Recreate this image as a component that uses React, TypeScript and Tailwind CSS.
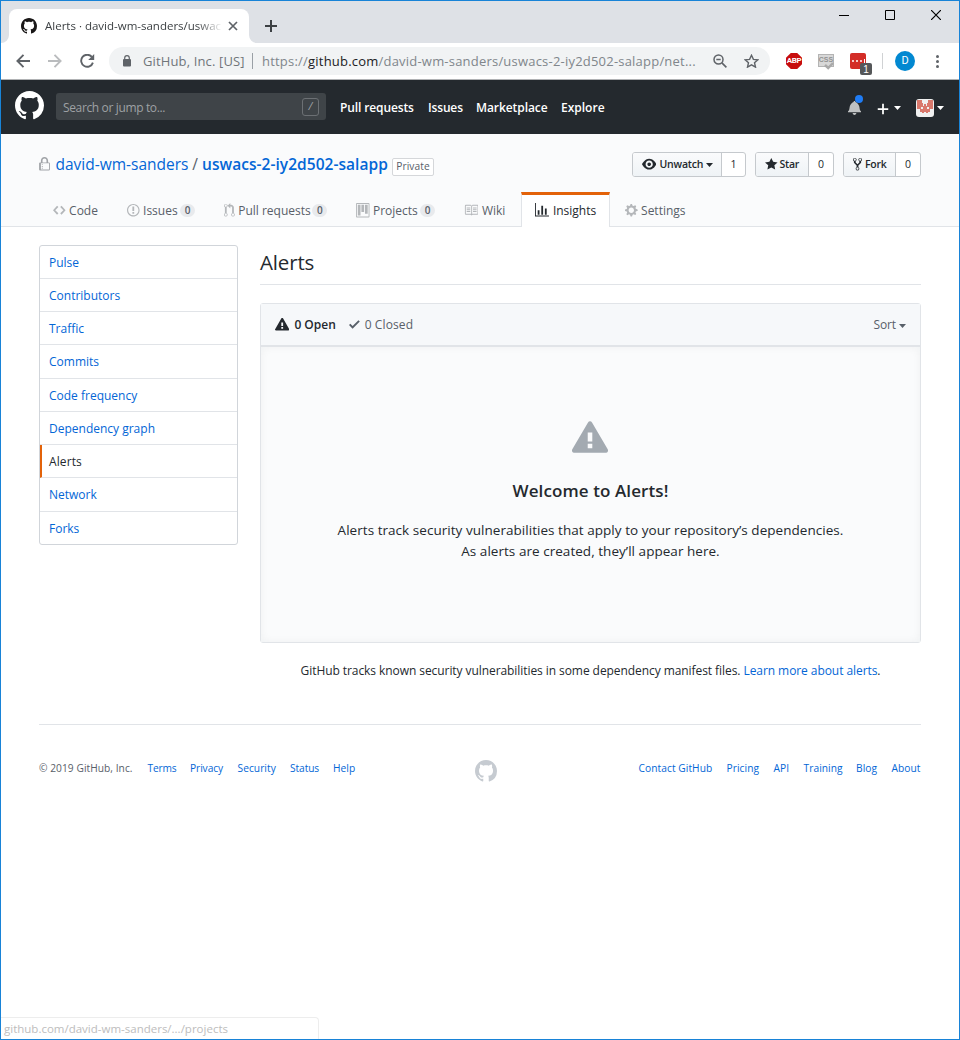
import type { ReactNode } from "react";

type IconProps = { d: string; vw?: number; className: string };

function Icon({ d, vw = 16, className }: IconProps) {
  return (
    <svg viewBox={`0 0 ${vw} 16`} className={`shrink-0 ${className}`} fill="currentColor" aria-hidden="true">
      <path fillRule="evenodd" d={d} />
    </svg>
  );
}

const P = {
  mark: "M8 0C3.58 0 0 3.58 0 8c0 3.54 2.29 6.53 5.47 7.59.4.07.55-.17.55-.38 0-.19-.01-.82-.01-1.49-2.01.37-2.53-.49-2.69-.94-.09-.23-.48-.94-.82-1.13-.28-.15-.68-.52-.01-.53.63-.01 1.08.58 1.23.82.72 1.21 1.87.87 2.33.66.07-.52.28-.87.51-1.07-1.78-.2-3.64-.89-3.64-3.95 0-.87.31-1.59.82-2.15-.08-.2-.36-1.02.08-2.12 0 0 .67-.21 2.2.82.64-.18 1.32-.27 2-.27.68 0 1.36.09 2 .27 1.53-1.04 2.2-.82 2.2-.82.44 1.1.16 1.92.08 2.12.51.56.82 1.27.82 2.15 0 3.07-1.87 3.75-3.65 3.95.29.25.54.73.54 1.48 0 1.07-.01 1.93-.01 2.2 0 .21.15.46.55.38A8.013 8.013 0 0 0 16 8c0-4.42-3.58-8-8-8z",
  lock: "M4 13H3v-1h1v1zm8-6v7c0 .55-.45 1-1 1H1c-.55 0-1-.45-1-1V7c0-.55.45-1 1-1h1V4c0-2.2 1.8-4 4-4s4 1.8 4 4v2h1c.55 0 1 .45 1 1zM3.8 6h4.41V4c0-1.22-.98-2.2-2.2-2.2-1.22 0-2.2.98-2.2 2.2v2H3.8zM11 7H2v7h9V7zM4 8H3v1h1V8zm0 2H3v1h1v-1z",
  code: "M9.5 3L8 4.5 11.5 8 8 11.5 9.5 13 14 8 9.5 3zm-5 0L0 8l4.5 5L6 11.5 2.5 8 6 4.5 4.5 3z",
  issue: "M7 2.3c3.14 0 5.7 2.56 5.7 5.7s-2.56 5.7-5.7 5.7A5.71 5.71 0 0 1 1.3 8c0-3.14 2.56-5.7 5.7-5.7zM7 1C3.14 1 0 4.14 0 8s3.14 7 7 7 7-3.14 7-7-3.14-7-7-7zm1 3H6v5h2V4zm0 6H6v2h2v-2z",
  pull: "M11 11.28V5c-.03-.78-.34-1.47-.94-2.06C9.46 2.35 8.78 2.03 8 2H7V0L4 3l3 3V4h1c.27.02.48.11.69.31.21.2.3.42.31.69v6.28A1.993 1.993 0 0 0 10 15a1.993 1.993 0 0 0 1-3.72zm-1 2.92c-.66 0-1.2-.55-1.2-1.2 0-.65.55-1.2 1.2-1.2.65 0 1.2.55 1.2 1.2 0 .65-.55 1.2-1.2 1.2zM4 3c0-1.11-.89-2-2-2a1.993 1.993 0 0 0-1 3.72v6.56A1.993 1.993 0 0 0 2 15a1.993 1.993 0 0 0 1-3.72V4.72c.59-.34 1-.98 1-1.72zm-.8 10c0 .66-.55 1.2-1.2 1.2-.65 0-1.2-.55-1.2-1.2 0-.65.55-1.2 1.2-1.2.65 0 1.2.55 1.2 1.2zM2 4.2C1.34 4.2.8 3.65.8 3c0-.65.55-1.2 1.2-1.2.65 0 1.2.55 1.2 1.2 0 .65-.55 1.2-1.2 1.2z",
  project: "M10 12h3V2h-3v10zm-4-2h3V2H6v8zm-4 4h3V2H2v12zm-1 1h13V1H1v14zM14 0H1a1 1 0 0 0-1 1v14a1 1 0 0 0 1 1h13a1 1 0 0 0 1-1V1a1 1 0 0 0-1-1z",
  book: "M3 5h4v1H3V5zm0 3h4V7H3v1zm0 2h4V9H3v1zm11-5h-4v1h4V5zm0 2h-4v1h4V7zm0 2h-4v1h4V9zm2-6v9c0 .55-.45 1-1 1H9.5l-1 1-1-1H2c-.55 0-1-.45-1-1V3c0-.55.45-1 1-1h5.5l1 1 1-1H15c.55 0 1 .45 1 1zm-8 .5L7.5 3H2v9h6V3.5zm7-.5H9.5l-.5.5V12h6V3z",
  graph: "M16 14v1H0V0h1v14h15zM5 13H3V8h2v5zm4 0H7V3h2v10zm4 0h-2V6h2v7z",
  gear: "M14 8.77v-1.6l-1.94-.64-.45-1.09.88-1.84-1.13-1.13-1.81.91-1.09-.45-.69-1.92h-1.6l-.63 1.94-1.11.45-1.84-.88-1.13 1.13.91 1.81-.45 1.09L0 7.23v1.59l1.94.64.45 1.09-.88 1.84 1.13 1.13 1.81-.91 1.09.45.69 1.92h1.59l.63-1.94 1.11-.45 1.84.88 1.13-1.13-.92-1.81.47-1.09L14 8.75v.02zM7 11c-1.66 0-3-1.34-3-3s1.34-3 3-3 3 1.34 3 3-1.34 3-3 3z",
  eye: "M8.06 2C3 2 0 8 0 8s3 6 8.06 6C13 14 16 8 16 8s-3-6-7.94-6zM8 12c-2.2 0-4-1.78-4-4 0-2.2 1.8-4 4-4 2.22 0 4 1.8 4 4 0 2.22-1.78 4-4 4zm2-4c0 1.11-.89 2-2 2-1.11 0-2-.89-2-2 0-1.11.89-2 2-2 1.11 0 2 .89 2 2z",
  star: "M14 6l-4.9-.64L7 1 4.9 5.36 0 6l3.6 3.26L2.67 14 7 11.67 11.33 14l-.93-4.74z",
  fork: "M8 1a1.993 1.993 0 0 0-1 3.72V6L5 8 3 6V4.72A1.993 1.993 0 0 0 2 1a1.993 1.993 0 0 0-1 3.72V6.5l3 3v1.78A1.993 1.993 0 0 0 5 15a1.993 1.993 0 0 0 1-3.72V9.5l3-3V4.72A1.993 1.993 0 0 0 8 1zM2 4.2C1.34 4.2.8 3.65.8 3c0-.65.55-1.2 1.2-1.2.65 0 1.2.55 1.2 1.2 0 .65-.55 1.2-1.2 1.2zm3 10c-.66 0-1.2-.55-1.2-1.2 0-.65.55-1.2 1.2-1.2.65 0 1.2.55 1.2 1.2 0 .65-.55 1.2-1.2 1.2zm3-10c-.66 0-1.2-.55-1.2-1.2 0-.65.55-1.2 1.2-1.2.65 0 1.2.55 1.2 1.2 0 .65-.55 1.2-1.2 1.2z",
  alert: "M8.893 1.5c-.183-.31-.52-.5-.887-.5s-.703.19-.886.5L.138 13.499a.98.98 0 0 0 0 1.001c.193.31.53.501.886.501h13.964c.367 0 .704-.19.877-.5a1.03 1.03 0 0 0 .01-1.002L8.893 1.5zm.133 11.497H6.987v-2.003h2.039v2.003zm0-3.004H6.987V5.987h2.039v4.006z",
  check: "M12 5l-8 8-4-4 1.5-1.5L4 10l6.5-6.5z",
  bell: "M14 12v1H0v-1l.73-.58c.77-.77.81-2.55 1.19-4.42C2.69 3.23 6 2 6 2c0-.55.45-1 1-1s1 .45 1 1c0 0 3.39 1.23 4.16 5 .38 1.88.42 3.66 1.19 4.42l.66.58H14zm-7 4c1.11 0 2-.89 2-2H5c0 1.11.89 2 2 2z",
  plus: "M12 9H7v5H5V9H0V7h5V2h2v5h5v2z",
};

function Caret({ className = "" }: { className?: string }) {
  return (
    <svg viewBox="0 0 7 4" className={`h-1 w-[7px] shrink-0 ${className}`} fill="currentColor" aria-hidden="true">
      <path d="M0 0h7L3.500 4z" />
    </svg>
  );
}

function TitleBar() {
  return (
    <div className="flex h-[42px] bg-[#dee1e6] pt-2">
      <svg className="h-2 w-2 shrink-0 self-end" viewBox="0 0 8 8" fill="#fff" aria-hidden="true">
        <path d="M8 0v8H0a8 8 0 0 0 8-8z" />
      </svg>
      <div className="flex h-[34px] w-[240px] shrink-0 items-center rounded-t-lg bg-white pl-3">
        <Icon d={P.mark} className="size-4 text-[#191717]" />
        <div className="ml-2 w-[176px] whitespace-nowrap text-[11.500px] text-[#3c4043] [mask-image:linear-gradient(to_right,black_152px,transparent_178px)]">
          Alerts · david-wm-sanders/uswac
        </div>
        <svg className="ml-[7px] size-[10px] shrink-0" viewBox="0 0 10 10" fill="none" stroke="#5f6368" strokeWidth="1.700" aria-hidden="true">
          <path d="M1 1l8 8M9 1L1 9" />
        </svg>
      </div>
      <svg className="h-2 w-2 shrink-0 self-end" viewBox="0 0 8 8" fill="#fff" aria-hidden="true">
        <path d="M0 0v8h8a8 8 0 0 1-8-8z" />
      </svg>
      <svg className="ml-2 mt-[11px] size-3 shrink-0" viewBox="0 0 12 12" fill="none" stroke="#3c4043" strokeWidth="2" aria-hidden="true">
        <path d="M6 0v12M0 6h12" />
      </svg>
      <div className="ml-auto mr-[18px] mt-[1px] flex h-3 gap-[36px] text-black">
        <svg className="size-[10px]" viewBox="0 0 10 10" stroke="currentColor" aria-hidden="true"><path d="M0 5.500h10" /></svg>
        <svg className="size-[10px]" viewBox="0 0 10 10" fill="none" stroke="currentColor" aria-hidden="true"><path d="M.5.5h9v9h-9z" /></svg>
        <svg className="size-[10px]" viewBox="0 0 10 10" fill="none" stroke="currentColor" strokeWidth="1.200" aria-hidden="true"><path d="M0 0l10 10M10 0L0 10" /></svg>
      </div>
    </div>
  );
}

function Toolbar() {
  return (
    <div className="flex h-9 items-center bg-white">
      <svg className="ml-[15px] h-[14px] w-[14px] shrink-0" viewBox="0 0 14 14" fill="none" stroke="#5f6368" strokeWidth="1.900" aria-hidden="true">
        <path d="M14 7H1.500M7.500 .8L1.400 7l6.100 6.200" />
      </svg>
      <svg className="ml-[18px] h-[14px] w-[14px] shrink-0" viewBox="0 0 14 14" fill="none" stroke="#babcbe" strokeWidth="1.900" aria-hidden="true">
        <path d="M0 7h12.500M6.500 .8L12.600 7l-6.100 6.200" />
      </svg>
      <svg className="ml-[18px] h-[14px] w-[15px] shrink-0" viewBox="0 0 15 14" aria-hidden="true">
        <path d="M11.800 2.900A6 6 0 1 0 12.900 8.600" fill="none" stroke="#5f6368" strokeWidth="1.900" />
        <path d="M14.200 0v6H8.200z" fill="#5f6368" />
      </svg>
      <div className="ml-[14px] flex h-7 w-[661px] shrink-0 items-center whitespace-nowrap rounded-full bg-[#f1f3f4] text-[13px] text-[#80868b]">
        <svg className="ml-[14px] h-[12px] w-[8px] shrink-0" viewBox="0 0 8 12" aria-hidden="true">
          <path d="M1.700 5V3a2.300 2.300 0 0 1 4.600 0v2" fill="none" stroke="#5f6368" strokeWidth="1.200" />
          <rect y="4" width="8" height="7.500" rx="1" fill="#5f6368" />
        </svg>
        <span className="ml-[11px] w-[110px] pl-px pt-px tracking-[0.140px] text-[#70757a]">GitHub, Inc. [US]</span>
        <span className="h-4 w-px bg-[#9aa0a6]" />
        <span className="ml-[9px] w-[450px] pt-px tracking-[0.210px]">
          https://<span className="text-[#202124]">github.com</span>/david-wm-sanders/uswacs-2-iy2d502-salapp/net...
        </span>
        <svg className="ml-[1px] size-[14px] shrink-0" viewBox="0 0 14 14" fill="none" stroke="#5f6368" strokeWidth="1.500" aria-hidden="true">
          <circle cx="5.500" cy="5.500" r="4.500" />
          <path d="M8.900 8.900l4.500 4.500M3.300 5.500h4.400" strokeWidth="1.600" />
        </svg>
        <svg className="ml-[17px] h-[14px] w-[15px] shrink-0" viewBox="0 0 15 14" fill="none" stroke="#5f6368" strokeWidth="1.400" aria-hidden="true">
          <path d="M7.500 1.300l1.900 4.100 4.400.4-3.300 2.900 1 4.400-4-2.300-4 2.300 1-4.400L1.200 5.800l4.400-.4z" />
        </svg>
      </div>
      <div className="ml-4 flex size-4 shrink-0 items-center justify-center bg-[#c70d0d] font-['Roboto'] text-[8px] font-bold tracking-[-0.300px] text-white [clip-path:polygon(30%_0,70%_0,100%_30%,100%_70%,70%_100%,30%_100%,0_70%,0_30%)]">ABP</div>
      <div className="relative ml-4 flex h-[13px] w-4 shrink-0 -translate-y-px items-start justify-center border border-[#b4b4b4] bg-[#d8d8d8] font-['Liberation_Sans'] text-[7px] font-bold leading-[10px] text-[#929292]">
        CSS
        <svg className="absolute -bottom-[4px] left-[5px] h-[8px] w-[10px]" viewBox="0 0 10 8" fill="none" stroke="#a9a9a9" strokeWidth="2.500" aria-hidden="true">
          <path d="M1 3l3.200 3L9 1" />
        </svg>
      </div>
      <div className="relative ml-4 flex size-4 shrink-0 items-center justify-center gap-[1.500px] rounded-[2px] bg-[#d32d27]">
        <span className="size-[2.500px] rounded-full bg-white" />
        <span className="size-[2.500px] rounded-full bg-white" />
        <span className="size-[2.500px] rounded-full bg-white" />
        <span className="h-1 w-px bg-white" />
        <span className="absolute left-[10px] top-[10px] flex h-[12px] w-[12px] items-center justify-center rounded-[2px] bg-[#555759] font-['Liberation_Sans'] text-[10px] text-white">1</span>
      </div>
      <span className="ml-4 h-4 w-px shrink-0 bg-[#d0d2d4]" />
      <div className="ml-3 flex size-5 shrink-0 items-center justify-center rounded-full bg-[#0288d1] font-['Roboto'] text-[11px] text-white">D</div>
      <div className="ml-[21px] flex shrink-0 flex-col gap-[2px]">
        <span className="size-[3px] rounded-full bg-[#5f6368]" />
        <span className="size-[3px] rounded-full bg-[#5f6368]" />
        <span className="size-[3px] rounded-full bg-[#5f6368]" />
      </div>
    </div>
  );
}

function SiteHeader() {
  return (
    <header className="flex h-[54px] items-center whitespace-nowrap bg-[#24292e] text-[12px] text-white">
      <Icon d={P.mark} className="-mt-[3px] ml-[14px] size-[29px]" />
      <div className="-mt-px ml-3 flex h-[27px] w-[270px] shrink-0 items-center rounded-[3px] bg-[#3f4448] pl-[7px] pr-[7px] text-[#9ea1a4]">
        <span className="mt-[3px] tracking-[-0.360px]">Search or jump to...</span>
        <span className="ml-auto flex h-[18px] w-[17px] items-center justify-center rounded-[3px] border border-[#6c7074] text-[11px] italic">/</span>
      </div>
      <nav className="ml-[14px] mt-[2px] flex shrink-0 font-semibold">
        <span className="w-[88px] tracking-[-0.120px]">Pull requests</span>
        <span className="w-[48px] tracking-[-0.150px]">Issues</span>
        <span className="w-[85px] tracking-[-0.080px]">Marketplace</span>
        <span className="w-[45px]">Explore</span>
      </nav>
      <div className="relative ml-auto mt-px h-4">
        <Icon d={P.bell} vw={14} className="h-[15px] w-[13px] text-[#bfc1c2]" />
        <span className="absolute -top-[5px] left-[7px] size-[8px] rounded-full bg-[#1f7cf5]" />
      </div>
      <Icon d={P.plus} vw={12} className="ml-[16px] mt-[3px] h-[14px] w-[12px]" />
      <Caret className="ml-[5px] mt-[2px]" />
      <div className="ml-[15px] mt-[2px] flex size-[18px] shrink-0 items-center justify-center rounded-[3px] bg-[#f0f0f0]">
        <svg className="-mt-[3px] h-[13px] w-[16px]" viewBox="0 0 16 13" fill="#d9786c" aria-hidden="true">
          <path fillRule="evenodd" d="M0 0h5v3h1v3h1V4h2v2h1V3h1V0h5v9h-3v3h-2v1H9v-1H7v1H5v-1H3V9H0zM4 7v2h2V7zM10 7v2h2V7z" />
        </svg>
      </div>
      <Caret className="ml-[3px] mr-[15px] mt-[2px]" />
    </header>
  );
}

function CountButton({ icon, label, count, w, cw }: { icon: ReactNode; label: ReactNode; count: string; w: string; cw: string }) {
  return (
    <div className="flex h-[25px] rounded-[3px] border border-[#c5c9cd] bg-white text-[10.500px] font-semibold text-[#24292e]">
      <div className={`flex items-center rounded-l-[2px] bg-gradient-to-b from-[#fafbfc] to-[#eff3f6] pl-[9px] ${w}`}>
        {icon}
        {label}
      </div>
      <div className={`flex items-center justify-center border-l border-[#c5c9cd] pt-px font-medium ${cw}`}>{count}</div>
    </div>
  );
}

function Counter() {
  return (
    <span className="flex h-[13px] w-[15px] items-center justify-center rounded-full bg-[#e8eaed] text-[10px] font-semibold text-[#586069]">0</span>
  );
}

function RepoTab({ icon, label, count, w, gap }: { icon: ReactNode; label: string; count?: boolean; w: string; gap: string }) {
  return (
    <div className={`flex shrink-0 items-center ${w}`}>
      <span className="flex text-[#b4b7ba]">{icon}</span>
      <span className={`ml-[3.500px] tracking-[-0.020px] text-[#586069] ${gap}`}>{label}</span>
      {count && <Counter />}
    </div>
  );
}

function RepoHead() {
  return (
    <section className="h-[93px] whitespace-nowrap border-b border-[#e1e4e8] bg-[#fafbfc] pl-[38px] pr-[38px]">
      <div className="flex h-[58px] items-start pt-[18px]">
        <div className="flex h-[25px] items-center text-[15.500px] text-[#0366d6]">
          <Icon d={P.lock} vw={12} className="mt-[-1px] h-[14.400px] w-[11px] text-[#a0a3a7]" />
          <span className="ml-[5.500px] w-[134.500px] pt-px">david-wm-sanders</span>
          <span className="w-[12px] pr-[2px] text-center text-[#586069]">/</span>
          <span className="w-[190px] pt-px font-semibold tracking-[0.040px]">uswacs-2-iy2d502-salapp</span>
          <span className="mt-[4px] flex h-[18px] w-[42px] items-center justify-center rounded-[2px] border border-[#d5d7da] bg-white text-[10.200px] tracking-[0.060px] text-[#586069]">Private</span>
        </div>
        <div className="ml-auto flex gap-[9px]">
          <CountButton
            w="w-[88px]"
            cw="w-[24px]"
            count="1"
            icon={<Icon d={P.eye} className="size-[14.400px]" />}
            label={<><span className="ml-[3px] mr-[3px] pt-px tracking-[-0.170px]">Unwatch</span><Caret /></>}
          />
          <CountButton w="w-[52px]" cw="w-[25px]" count="0" icon={<Icon d={P.star} vw={14} className="h-[14.400px] w-[12.600px]" />} label={<span className="ml-[2px] pt-px tracking-[-0.250px]">Star</span>} />
          <CountButton w="w-[51px]" cw="w-[25px]" count="0" icon={<Icon d={P.fork} vw={10} className="h-[14.400px] w-[9px]" />} label={<span className="ml-[3px] pt-px tracking-[-0.300px]">Fork</span>} />
        </div>
      </div>
      <nav className="flex h-[35px] text-[12px]">
        <div className="flex h-[36px] items-center pl-[14px] pt-px">
          <RepoTab w="w-[74px]" gap="" label="Code" icon={<Icon d={P.code} vw={14} className="h-[14.400px] w-[12.600px]" />} />
          <RepoTab w="w-[97px]" gap="w-[37px]" count label="Issues" icon={<Icon d={P.issue} vw={14} className="h-[14.400px] w-[12.600px]" />} />
          <RepoTab w="w-[132px]" gap="w-[74px]" count label="Pull requests" icon={<Icon d={P.pull} vw={12} className="h-[14.400px] w-[10.800px]" />} />
          <RepoTab w="w-[108px]" gap="w-[47px]" count label="Projects" icon={<Icon d={P.project} vw={15} className="h-[14.400px] w-[13.500px]" />} />
          <RepoTab w="w-[57px]" gap="" label="Wiki" icon={<Icon d={P.book} className="size-[14.400px]" />} />
        </div>
        <div className="flex w-[89px] items-center border-x border-t-[3px] border-x-[#e1e4e8] border-t-[#e36209] bg-white pb-[1px] pl-[13px] text-[#24292e]">
          <Icon d={P.graph} className="size-[14.400px]" />
          <span className="ml-[3.500px]">Insights</span>
        </div>
        <div className="flex h-[36px] items-center pl-[15px] pt-px">
          <RepoTab w="w-[70px]" gap="" label="Settings" icon={<Icon d={P.gear} vw={14} className="h-[14.400px] w-[12.600px]" />} />
        </div>
      </nav>
    </section>
  );
}

const MENU = ["Pulse", "Contributors", "Traffic", "Commits", "Code frequency", "Dependency graph", "Alerts", "Network", "Forks"];

function SideMenu() {
  return (
    <nav className="grid h-[300px] w-[199px] shrink-0 grid-rows-[33px_33px_33px_34px_33px_33px_33px_34px_32px] divide-y divide-[#e1e4e8] overflow-hidden rounded-[3px] border border-[#d1d5da] text-[12px] text-[#0366d6]">
      {MENU.map((m) =>
        m === "Alerts" ? (
          <div key={m} className="flex items-center border-l-2 border-l-[#e36209] pl-[7px] pt-px font-medium tracking-[0.100px] text-[#24292e]">{m}</div>
        ) : (
          <div key={m} className="flex items-center pl-[9px] pt-px">{m}</div>
        ),
      )}
    </nav>
  );
}

function AlertsPanel() {
  return (
    <main className="w-[661px] shrink-0 text-[#24292e]">
      <h1 className="h-[40px] border-b border-[#e1e4e8] pt-[2px] text-[20.500px] leading-[30px] tracking-[-0.150px]">Alerts</h1>
      <div className="mt-[18px] h-[340px] rounded-[3px] border border-[#e1e4e8]">
        <div className="flex h-[43px] items-center border-b-2 border-[#e1e4e8] bg-[#f6f8fa] pl-[14px] pr-[13px] text-[12px]">
          <Icon d={P.alert} className="size-[14.400px]" />
          <span className="ml-[5px] w-[54.500px] font-semibold">0 Open</span>
          <Icon d={P.check} vw={12} className="h-[14.400px] w-[10.800px] text-[#586069]" />
          <span className="ml-[5px] tracking-[0.100px] text-[#586069]">0 Closed</span>
          <span className="ml-auto mr-[3px] tracking-[-0.150px] text-[#586069]">Sort</span>
          <Caret className="mr-px mt-[2px] text-[#586069]" />
        </div>
        <div className="flex h-[295px] flex-col items-center bg-[#fafbfc] pt-[72px] shadow-[inset_0_0_9px_rgba(27,31,35,0.050)]">
          <Icon d={P.alert} className="mr-px size-9 text-[#a3aab1]" />
          <h2 className="mt-[22px] text-[17px] font-semibold leading-[27px] tracking-[0.100px]">Welcome to Alerts!</h2>
          <p className="mt-[16px] whitespace-nowrap text-center text-[13.500px] leading-[21px] tracking-[0.040px]">
            Alerts track security vulnerabilities that apply to your repository’s dependencies.
            <br />
            As alerts are created, they’ll appear here.
          </p>
        </div>
      </div>
      <p className="mt-[18px] text-center text-[12px] leading-[19px] tracking-[-0.070px]">
        GitHub tracks known security vulnerabilities in some dependency manifest files.{" "}
        <span className="text-[#0366d6]">Learn more about alerts</span>.
      </p>
    </main>
  );
}

function Footer() {
  return (
    <footer className="mx-[38px] mt-[44px] flex h-[90px] items-start whitespace-nowrap border-t border-[#e1e4e8] pt-[35px] text-[10.200px] leading-[16px] text-[#0366d6]">
      <div className="flex w-[436px] tracking-[0.050px]">
        <span className="w-[108.500px] text-[#586069]">© 2019 GitHub, Inc.</span>
        <span className="w-[42.500px] tracking-[-0.200px]">Terms</span>
        <span className="w-[47.500px] tracking-[-0.080px]">Privacy</span>
        <span className="w-[52.500px]">Security</span>
        <span className="w-[43px] tracking-[-0.080px]">Status</span>
        <span>Help</span>
      </div>
      <Icon d={P.mark} className="size-[22px] text-[#c6cbd1]" />
      <div className="ml-auto flex tracking-[0.070px]">
        <span className="w-[88px]">Contact GitHub</span>
        <span className="w-[47px]">Pricing</span>
        <span className="w-[30px]">API</span>
        <span className="w-[52.500px]">Training</span>
        <span className="w-[35.500px]">Blog</span>
        <span className="w-[29.500px]">About</span>
      </div>
    </footer>
  );
}

export default function App() {
  return (
    <div className="relative flex h-[1040px] w-[960px] flex-col overflow-hidden border border-[#1883d7] bg-white font-['Open_Sans','Noto_Sans',sans-serif]">
      <TitleBar />
      <Toolbar />
      <div className="h-px shrink-0 bg-[#b0b2b4]" />
      <SiteHeader />
      <RepoHead />
      <div className="flex gap-[22px] pl-[38px] pt-[18px]">
        <SideMenu />
        <AlertsPanel />
      </div>
      <Footer />
      <div className="mt-auto flex h-[22px] w-[318px] items-center rounded-tr border-r border-t border-[#ededed] bg-white pl-[3px] text-[11.500px] text-[#bdbdbd]">
        github.com/david-wm-sanders/.../projects
      </div>
    </div>
  );
}
